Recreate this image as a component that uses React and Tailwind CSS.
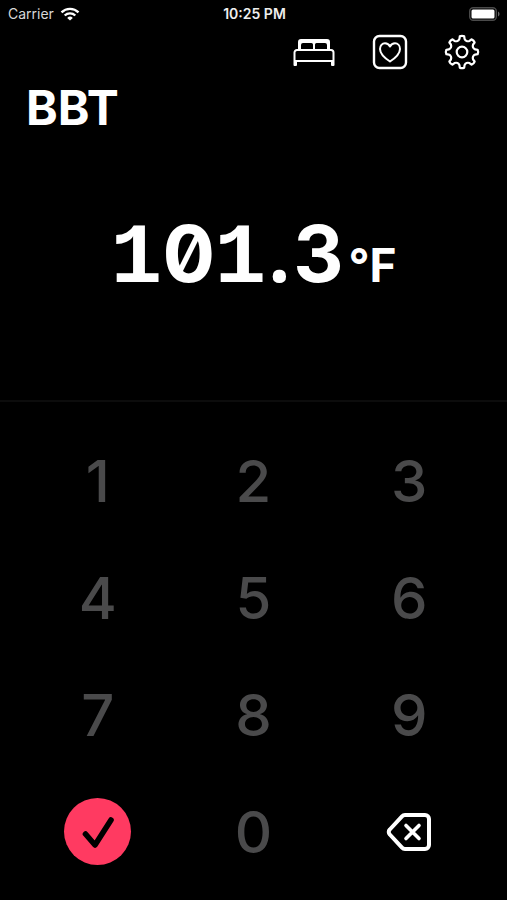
import { useState } from 'react';

const KEYS = ['1', '2', '3', '4', '5', '6', '7', '8', '9'];

// Builds an eight-toothed outline around the centre of a 40x40 box
const gearPath = () => {
  const point = (radius, degrees) => {
    const angle = ((degrees - 90) * Math.PI) / 180;
    return `${(20 + radius * Math.cos(angle)).toFixed(2)} ${(20 + radius * Math.sin(angle)).toFixed(2)}`;
  };
  let d = '';
  for (let i = 0; i < 8; i++) {
    const a = i * 45;
    d += `${i ? 'L' : 'M'}${point(13.4, a - 11)}L${point(15.8, a - 8)}Q${point(16.7, a)} ${point(15.8, a + 8)}`;
    d += `L${point(13.4, a + 11)}C${point(11.6, a + 17)} ${point(11.6, a + 28)} ${point(13.4, a + 34)}`;
  }
  return `${d}Z`;
};

const BedIcon = () => (
  <svg viewBox="-2 0 48 40" className="w-12 h-10" fill="none" stroke="currentColor" strokeWidth="2" strokeLinejoin="round" aria-hidden="true">
    <path d="M6 18V10a3 3 0 0 1 3-3h26a3 3 0 0 1 3 3v8h-3v-5a2 2 0 0 0-2-2H24.500a1.500 1.500 0 0 0-1.500 1.500V18h-2v-5.500a1.500 1.500 0 0 0-1.500-1.500H11a2 2 0 0 0-2 2v5Z" fill="currentColor" stroke="none" />
    <path d="M2.500 33V20.500a2.500 2.500 0 0 1 2.500-2.500h34a2.500 2.500 0 0 1 2.500 2.500V33h-1.500v-4h-36v4ZM4.500 29h35" />
  </svg>
);

const HeartIcon = () => (
  <svg viewBox="0 0 40 40" className="w-10 h-10" fill="none" stroke="currentColor" strokeLinejoin="round" aria-hidden="true">
    <rect x="4" y="4" width="32" height="32" rx="5.500" strokeWidth="2.400" />
    <path d="M20 29.500c-5-3.400-10-7.600-10-12.600 0-3.300 2.200-5.600 5-5.600 2.200 0 4 1.200 5 3.200 1-2 2.800-3.200 5-3.200 2.800 0 5 2.300 5 5.600 0 5-5 9.200-10 12.600Z" strokeWidth="2" />
  </svg>
);

const GearIcon = () => (
  <svg viewBox="0 0 40 40" className="w-10 h-10" fill="none" stroke="currentColor" strokeWidth="2.200" strokeLinejoin="round" aria-hidden="true">
    <path d={gearPath()} />
    <circle cx="20" cy="20" r="5.300" />
  </svg>
);

const StatusBar = () => (
  <div className="grid grid-cols-3 items-center h-7 pl-2 pr-1.5 text-[14px] leading-4">
    <div className="flex items-center gap-1.5 text-[#d8d8d8]">
      <span>Carrier</span>
      <svg viewBox="0 0 20 14" className="w-5 h-[14px]" fill="none" stroke="#fff" strokeWidth="2.400" aria-hidden="true">
        <path d="M1.500 5.300a12.200 12.200 0 0 1 17 0" />
        <path d="M4.700 8.500a7.600 7.600 0 0 1 10.600 0" />
        <path d="M10 13.500 7.200 10.900a4 4 0 0 1 5.600 0Z" fill="#fff" stroke="none" />
      </svg>
    </div>
    <div className="text-center font-semibold text-[#eee] whitespace-nowrap">10:25 PM</div>
    <svg viewBox="0 0 32 14" className="w-8 h-[14px] justify-self-end" aria-hidden="true">
      <rect x="0.700" y="0.700" width="26.600" height="12.600" rx="3.500" fill="none" stroke="#4a4a4a" strokeWidth="1.400" />
      <rect x="2.500" y="2.500" width="23" height="9" rx="1.500" fill="#fff" />
      <path d="M29 4.500c2 .8 2 4.200 0 5Z" fill="#666" />
    </svg>
  </div>
);

const DIGIT_CLASS = "w-[52px] text-center text-[78px] font-['Inter',sans-serif] [font-feature-settings:'zero']";

// The footed one and the round point come from other families than the rest
const SPECIAL_CLASS = {
  1: "w-[52px] text-center text-[86px] font-['Liberation_Mono',monospace]",
  '.': "w-[26px] text-center text-[78px] font-['Open_Sans',sans-serif]",
};

const App = () => {
  const [value, setValue] = useState('101.3');

  const handlePress = (key) => {
    setValue((prev) => {
      const digits = (prev.replace('.', '') + key).slice(0, 4);
      return digits.length > 3 ? `${digits.slice(0, 3)}.${digits.slice(3)}` : digits;
    });
  };

  const handleDelete = () => setValue((prev) => prev.slice(0, -1).replace(/\.$/, ''));

  const keyClass = 'flex items-center justify-center text-[58px] leading-none font-medium text-[#4a4a4b]';

  return (
    <div className="min-h-screen flex flex-col bg-black text-white font-['Inter',sans-serif]">
      <StatusBar />
      <header>
        <nav className="flex items-center justify-end h-12 pr-[25px] gap-8">
          <button type="button" aria-label="Sleep"><BedIcon /></button>
          <button type="button" aria-label="Health"><HeartIcon /></button>
          <button type="button" aria-label="Settings"><GearIcon /></button>
        </nav>
        <h1 className="px-[26px] pt-1.5 text-[48px] leading-[52px] font-bold">BBT</h1>
      </header>

      <main className="flex-1 flex flex-col">
        <output className="flex-1 flex items-baseline justify-center pt-[70px] font-bold leading-[96px]">
          {value.split('').map((char, i) => (
            <span key={i} className={SPECIAL_CLASS[char] || DIGIT_CLASS}>{char}</span>
          ))}
          <span className="pl-1 text-[46px]">°F</span>
        </output>

        <section className="grid grid-cols-3 auto-rows-[117px] px-5 pt-5 pb-[10px] border-t-2 border-[#0c0c0c]">
          {KEYS.map((key) => (
            <button key={key} type="button" className={keyClass} onClick={() => handlePress(key)}>
              {key}
            </button>
          ))}
          <button type="button" aria-label="Save" className="flex items-center justify-center">
            <span className="flex items-center justify-center w-[67px] h-[67px] rounded-full bg-[#ff3a61]">
              <svg viewBox="0 0 40 40" className="w-10 h-10" fill="none" stroke="#000" strokeWidth="5.600" strokeLinecap="round" strokeLinejoin="round" aria-hidden="true">
                <path d="M7.500 22l9.500 11L33 8" />
              </svg>
            </span>
          </button>
          <button type="button" className={keyClass} onClick={() => handlePress('0')}>0</button>
          <button type="button" aria-label="Delete" className="flex items-center justify-center" onClick={handleDelete}>
            <svg viewBox="0 0 46 40" className="w-[46px] h-10" fill="none" stroke="currentColor" strokeWidth="4" strokeLinecap="round" strokeLinejoin="round" aria-hidden="true">
              <path d="M19 3H39a4 4 0 0 1 4 4V33a4 4 0 0 1-4 4H19a4 4 0 0 1-3-1.300L3.800 22.500a3.500 3.500 0 0 1 0-5L16 4.300A4 4 0 0 1 19 3Z" />
              <path d="M20 13.500l13 13M33 13.500L20 26.500" strokeWidth="3.600" />
            </svg>
          </button>
        </section>
      </main>
    </div>
  );
};

export default App;
